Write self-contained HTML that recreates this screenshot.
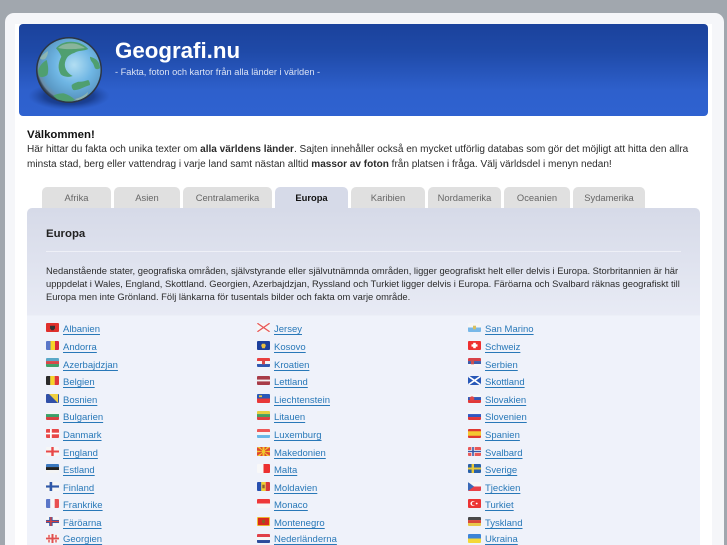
<!DOCTYPE html>
<html lang="sv"><head><meta charset="utf-8"><title>Geografi.nu</title>
<style>
html,body{margin:0;padding:0;width:727px;height:545px;overflow:hidden;background:#a1a7ae;font-family:"Liberation Sans",sans-serif;color:#222}
#w{position:relative;width:727px;height:545px;overflow:hidden;filter:blur(.3px)}
.a{position:absolute;white-space:nowrap}
#card{left:5px;top:13px;width:719px;height:532px;background:#f5f6f9;border-radius:9px 9px 0 0}
#in{left:15px;top:24px;width:697px;height:521px;background:#fff}
#hd{left:19px;top:24px;width:689px;height:92px;border-radius:4px;background:linear-gradient(#1b429c,#1f4aa8 30%,#2e60cc 72%,#2f62d0)}
.tab{position:absolute;top:187px;height:21px;background:#e0e0e0;border-radius:5px 5px 0 0;text-align:center;font-size:9.4px;line-height:21px;color:#666}
.tab.on{background:#d6dae8;color:#111;font-weight:bold}
#pn{left:27px;top:208px;width:673px;height:337px;border-radius:5px 5px 0 0;background:linear-gradient(#d6dae8,#e8ebf5 107px,#eff2fa 108px)}
.t{font-size:9.4px;line-height:12px;color:#2b2b2b}
.l{position:absolute;margin-top:2px;font-size:9.5px;line-height:11px;color:#2878b8;text-decoration:underline;text-underline-offset:2px;white-space:nowrap}
svg.f{position:absolute;width:13px;height:9px;border-radius:1px}
</style></head><body><div id="w">
<div class="a" id="card"></div><div class="a" id="in"></div><div class="a" id="hd"></div>

<svg class="a" style="left:28px;top:34px" width="84" height="76" viewBox="0 0 84 76">
<defs>
<radialGradient id="sh"><stop offset="0" stop-color="#0f2c6c" stop-opacity=".95"/><stop offset=".6" stop-color="#15357f" stop-opacity=".75"/><stop offset="1" stop-color="#1d459f" stop-opacity="0"/></radialGradient>
<radialGradient id="oc" cx=".58" cy=".42" r=".6"><stop offset="0" stop-color="#b2def2"/><stop offset=".5" stop-color="#6fb6e4"/><stop offset=".85" stop-color="#5b9ac6"/><stop offset=".96" stop-color="#6a8ca6"/><stop offset="1" stop-color="#3a4a5e"/></radialGradient>
<clipPath id="gc"><circle cx="41" cy="36" r="31.500"/></clipPath>
</defs>
<ellipse cx="41" cy="62" rx="41" ry="14" fill="url(#sh)"/>
<circle cx="41" cy="36" r="33" fill="#2c3644"/>
<circle cx="41" cy="36" r="31.500" fill="url(#oc)"/>
<g clip-path="url(#gc)" fill="#4f9f70">
<path d="M28 14.300C32 9 38 7.700 42 7.700C50 7.500 56 10 60.300 15C56 17 52 16.500 48.700 17.700C47 18.500 46 19 45.300 19.300C41 21 39.500 23 38.700 24.300C37 27 36.500 30 37 32.700C38 37 41 40 44.700 42C42 43 40 43 38.700 42.700C36 42.500 34 41.500 32.700 40.300C31 37 30.300 34 30.700 31C31 28 32 25 33.300 22.700C32 19 30 16.500 28 14.300Z"/>
<path d="M10.300 36C12 31 15 28 18.700 26C20 31 21 37 19.300 41C17 43 14 43.500 12 42.700C10.500 41 10 38.500 10.300 36Z"/>
<path d="M62 22.700C65 23.500 67 24.500 68.700 26C71 28.500 72 31 72 34.300C70 35.500 68 35.500 67 34.300C66 32 65.500 29.500 63.700 27.700C62.500 26 62 24.500 62 22.700Z"/>
<path d="M43.700 51C46 49 48 48.500 50.300 47.700C54 48 57 47 60.300 46C61.500 47.500 62 49 62 51C59 52 56.500 53 53.700 54.300C51 55.500 48 56.500 45.300 56C44 54.500 43.500 53 43.700 51Z"/>
<path d="M25.300 61.700C28 60 32 59.500 35.300 59.300C40 60.500 44 63 47 66C43 68 39 68.500 35.300 68.300C31 67 28 64.500 25.300 61.700Z"/>
</g>
<g clip-path="url(#gc)" fill="#9dbdaa" opacity=".75"><path d="M30 14C34 10 40 9 46 9.500C50 10 54 12 57 14C50 15 38 16 30 14Z"/><path d="M12 24C14 21 17 19 20 17C20 20 19 23 17 25C15 26 13 26 12 24Z"/><path d="M47 65C52 64 57 61 60 58C60 61 57 65 52 67C50 67 48 66 47 65Z"/></g>
</svg>

<div class="a" style="left:115px;top:38px;font-size:22.3px;line-height:26px;font-weight:bold;color:#fff">Geografi.nu</div>
<div class="a" style="left:115px;top:66px;font-size:9.25px;line-height:12px;color:#dbe3f5">- Fakta, foton och kartor från alla länder i världen -</div>

<div class="a" style="left:27px;top:128px;font-size:11.4px;line-height:14px;font-weight:bold;color:#111">Välkommen!</div>
<div class="a t" style="left:27px;top:144px;font-size:10.06px">Här hittar du fakta och unika texter om <b>alla världens länder</b>. Sajten innehåller också en mycket utförlig databas som gör det möjligt att hitta den allra</div>
<div class="a t" style="left:27px;top:159px;font-size:10.06px">minsta stad, berg eller vattendrag i varje land samt nästan alltid <b>massor av foton</b> från platsen i fråga. Välj världsdel i menyn nedan!</div>

<div class="tab" style="left:42px;width:69px">Afrika</div>
<div class="tab" style="left:114px;width:66px">Asien</div>
<div class="tab" style="left:183px;width:89px">Centralamerika</div>
<div class="tab on" style="left:275px;width:73px">Europa</div>
<div class="tab" style="left:351px;width:74px">Karibien</div>
<div class="tab" style="left:428px;width:73px">Nordamerika</div>
<div class="tab" style="left:504px;width:66px">Oceanien</div>
<div class="tab" style="left:573px;width:72px">Sydamerika</div>

<div class="a" id="pn"></div>
<div class="a" style="left:46px;top:227px;font-size:11.4px;line-height:14px;font-weight:bold;color:#222">Europa</div>
<div class="a" style="left:46px;top:251px;width:635px;height:1px;background:#eef0f7"></div>
<div class="a t" style="left:46px;top:265px">Nedanstående stater, geografiska områden, självstyrande eller självutnämnda områden, ligger geografiskt helt eller delvis i Europa. Storbritannien är här</div>
<div class="a t" style="left:46px;top:278px">upppdelat i Wales, England, Skottland. Georgien, Azerbajdzjan, Ryssland och Turkiet ligger delvis i Europa. Färöarna och Svalbard räknas geografiskt till</div>
<div class="a t" style="left:46px;top:291px">Europa men inte Grönland. Följ länkarna för tusentals bilder och fakta om varje område.</div>

<!-- column 1 -->
<svg class="f" style="left:46px;top:323px" preserveAspectRatio="none" viewBox="0 0 13 10"><rect width="13" height="10" fill="#e0302c"/><path d="M4 3h5v3l-1.500 2h-2L4 6z" fill="#333"/></svg><div class="l" style="left:63px;top:322px">Albanien</div>
<svg class="f" style="left:46px;top:341px" preserveAspectRatio="none" viewBox="0 0 13 10"><rect width="4.500" height="10" fill="#5a76c8"/><rect x="4.500" width="4.500" height="10" fill="#f5d428"/><rect x="9" width="4" height="10" fill="#d8283c"/></svg><div class="l" style="left:63px;top:340px">Andorra</div>
<svg class="f" style="left:46px;top:358px" preserveAspectRatio="none" viewBox="0 0 13 10"><rect width="13" height="3.400" fill="#5aa8c8"/><rect y="3.400" width="13" height="3.300" fill="#d84848"/><rect y="6.700" width="13" height="3.300" fill="#40a068"/></svg><div class="l" style="left:63px;top:358px">Azerbajdzjan</div>
<svg class="f" style="left:46px;top:376px" preserveAspectRatio="none" viewBox="0 0 13 10"><rect width="4.300" height="10" fill="#2a2a2a"/><rect x="4.300" width="4.400" height="10" fill="#f5d428"/><rect x="8.700" width="4.300" height="10" fill="#e0383c"/></svg><div class="l" style="left:63px;top:375px">Belgien</div>
<svg class="f" style="left:46px;top:394px" preserveAspectRatio="none" viewBox="0 0 13 10"><rect width="13" height="10" fill="#3050a8"/><path d="M3 0h9v10z" fill="#f0d040"/></svg><div class="l" style="left:63px;top:393px">Bosnien</div>
<svg class="f" style="left:46px;top:411px" preserveAspectRatio="none" viewBox="0 0 13 10"><rect width="13" height="3.400" fill="#f4f4f4"/><rect y="3.400" width="13" height="3.300" fill="#3aa068"/><rect y="6.700" width="13" height="3.300" fill="#d84040"/></svg><div class="l" style="left:63px;top:410px">Bulgarien</div>
<svg class="f" style="left:46px;top:429px" preserveAspectRatio="none" viewBox="0 0 13 10"><rect width="13" height="10" fill="#e84848"/><rect x="4" width="1.800" height="10" fill="#fff"/><rect y="4.100" width="13" height="1.800" fill="#fff"/></svg><div class="l" style="left:63px;top:428px">Danmark</div>
<svg class="f" style="left:46px;top:447px" preserveAspectRatio="none" viewBox="0 0 13 10"><rect width="13" height="10" fill="#f6f6f6"/><rect x="5.300" width="2.400" height="10" fill="#e84848"/><rect y="3.900" width="13" height="2.200" fill="#e84848"/></svg><div class="l" style="left:63px;top:446px">England</div>
<svg class="f" style="left:46px;top:464px" preserveAspectRatio="none" viewBox="0 0 13 10"><rect width="13" height="3.400" fill="#3a78c0"/><rect y="3.400" width="13" height="3.300" fill="#222"/><rect y="6.700" width="13" height="3.300" fill="#f4f4f4"/></svg><div class="l" style="left:63px;top:463px">Estland</div>
<svg class="f" style="left:46px;top:482px" preserveAspectRatio="none" viewBox="0 0 13 10"><rect width="13" height="10" fill="#f6f6f6"/><rect x="3.600" width="2.600" height="10" fill="#3058a8"/><rect y="3.800" width="13" height="2.400" fill="#3058a8"/></svg><div class="l" style="left:63px;top:481px">Finland</div>
<svg class="f" style="left:46px;top:499px" preserveAspectRatio="none" viewBox="0 0 13 10"><rect width="4.300" height="10" fill="#5a76c8"/><rect x="4.300" width="4.400" height="10" fill="#f6f6f6"/><rect x="8.700" width="4.300" height="10" fill="#e85050"/></svg><div class="l" style="left:63px;top:498px">Frankrike</div>
<svg class="f" style="left:46px;top:517px" preserveAspectRatio="none" viewBox="0 0 13 10"><rect width="13" height="10" fill="#f6f6f6"/><rect x="3.200" width="3.400" height="10" fill="#3058a8"/><rect y="3.300" width="13" height="3.400" fill="#3058a8"/><rect x="4.200" width="1.400" height="10" fill="#d84040"/><rect y="4.300" width="13" height="1.400" fill="#d84040"/></svg><div class="l" style="left:63px;top:516px">Färöarna</div>
<svg class="f" style="left:46px;top:534px" preserveAspectRatio="none" viewBox="0 0 13 10"><rect width="13" height="10" fill="#f6f6f6"/><rect x="5.500" width="2" height="10" fill="#e05050"/><rect y="4" width="13" height="2" fill="#e05050"/><path d="M2 1h2v3H2zM9 1h2v3H9zM2 6.500h2v3H2zM9 6.500h2v3H9z" fill="#e88080"/></svg><div class="l" style="left:63px;top:532px">Georgien</div>

<!-- column 2 -->
<svg class="f" style="left:257px;top:323px" preserveAspectRatio="none" viewBox="0 0 13 10"><rect width="13" height="10" fill="#f6f6f6"/><path d="M0 0l13 10M13 0L0 10" stroke="#e85858" stroke-width="1.400"/></svg><div class="l" style="left:274px;top:322px">Jersey</div>
<svg class="f" style="left:257px;top:341px" preserveAspectRatio="none" viewBox="0 0 13 10"><rect width="13" height="10" fill="#1c3f9c"/><path d="M5 3h3l.8 2-1 3h-2.600l-1-3z" fill="#e8c040"/></svg><div class="l" style="left:274px;top:340px">Kosovo</div>
<svg class="f" style="left:257px;top:358px" preserveAspectRatio="none" viewBox="0 0 13 10"><rect width="13" height="3.400" fill="#e84040"/><rect y="3.400" width="13" height="3.300" fill="#f6f6f6"/><rect y="6.700" width="13" height="3.300" fill="#3058b0"/><rect x="5" y="2.500" width="3" height="4.500" fill="#d84848"/></svg><div class="l" style="left:274px;top:358px">Kroatien</div>
<svg class="f" style="left:257px;top:376px" preserveAspectRatio="none" viewBox="0 0 13 10"><rect width="13" height="10" fill="#a83c48"/><rect y="4" width="13" height="2" fill="#f0f0f0"/></svg><div class="l" style="left:274px;top:375px">Lettland</div>
<svg class="f" style="left:257px;top:394px" preserveAspectRatio="none" viewBox="0 0 13 10"><rect width="13" height="5" fill="#2858b8"/><rect y="5" width="13" height="5" fill="#e83838"/><rect x="2" y="1.500" width="3" height="2" fill="#e8c840"/></svg><div class="l" style="left:274px;top:393px">Liechtenstein</div>
<svg class="f" style="left:257px;top:411px" preserveAspectRatio="none" viewBox="0 0 13 10"><rect width="13" height="3.400" fill="#e8d040"/><rect y="3.400" width="13" height="3.300" fill="#48a060"/><rect y="6.700" width="13" height="3.300" fill="#e04040"/></svg><div class="l" style="left:274px;top:410px">Litauen</div>
<svg class="f" style="left:257px;top:429px" preserveAspectRatio="none" viewBox="0 0 13 10"><rect width="13" height="3.400" fill="#ee5858"/><rect y="3.400" width="13" height="3.300" fill="#f6f6f6"/><rect y="6.700" width="13" height="3.300" fill="#68b8e8"/></svg><div class="l" style="left:274px;top:428px">Luxemburg</div>
<svg class="f" style="left:257px;top:447px" preserveAspectRatio="none" viewBox="0 0 13 10"><rect width="13" height="10" fill="#e04830"/><path d="M6.500 5L0 0h3zM6.500 5L13 0h-3zM6.500 5L0 10h3zM6.500 5L13 10h-3zM6.500 5L0 4v2zM6.500 5L13 4v2zM5.500 0h2v10h-2z" fill="#f0c830"/><circle cx="6.500" cy="5" r="1.800" fill="#f0c830"/></svg><div class="l" style="left:274px;top:446px">Makedonien</div>
<svg class="f" style="left:257px;top:464px" preserveAspectRatio="none" viewBox="0 0 13 10"><rect width="6.500" height="10" fill="#f8f8f8"/><rect x="6.500" width="6.500" height="10" fill="#ec3030"/></svg><div class="l" style="left:274px;top:463px">Malta</div>
<svg class="f" style="left:257px;top:482px" preserveAspectRatio="none" viewBox="0 0 13 10"><rect width="4.300" height="10" fill="#2850b0"/><rect x="4.300" width="4.400" height="10" fill="#f0d030"/><rect x="8.700" width="4.300" height="10" fill="#d83838"/><rect x="5.300" y="3" width="2.400" height="4" fill="#906030"/></svg><div class="l" style="left:274px;top:481px">Moldavien</div>
<svg class="f" style="left:257px;top:499px" preserveAspectRatio="none" viewBox="0 0 13 10"><rect width="13" height="5" fill="#ee3838"/><rect y="5" width="13" height="5" fill="#f6f6f6"/></svg><div class="l" style="left:274px;top:498px">Monaco</div>
<svg class="f" style="left:257px;top:517px" preserveAspectRatio="none" viewBox="0 0 13 10"><rect width="13" height="10" fill="#eec030"/><rect x="1" y="1" width="11" height="8" fill="#d82820"/><path d="M5 3h3v3l-1.500 1.500L5 6z" fill="#8a6020"/></svg><div class="l" style="left:274px;top:516px">Montenegro</div>
<svg class="f" style="left:257px;top:534px" preserveAspectRatio="none" viewBox="0 0 13 10"><rect width="13" height="3.400" fill="#e04048"/><rect y="3.400" width="13" height="3.300" fill="#f6f6f6"/><rect y="6.700" width="13" height="3.300" fill="#2c4c9c"/></svg><div class="l" style="left:274px;top:532px">Nederländerna</div>

<!-- column 3 -->
<svg class="f" style="left:468px;top:323px" preserveAspectRatio="none" viewBox="0 0 13 10"><rect width="13" height="5" fill="#f6f6f6"/><rect y="5" width="13" height="5" fill="#78b8e8"/><rect x="5" y="3" width="3" height="4" fill="#d8c060"/></svg><div class="l" style="left:485px;top:322px">San Marino</div>
<svg class="f" style="left:468px;top:341px" preserveAspectRatio="none" viewBox="0 0 13 10"><rect width="13" height="10" fill="#ee3030"/><rect x="5.200" y="2" width="2.600" height="6" fill="#fff"/><rect x="3.500" y="3.700" width="6" height="2.600" fill="#fff"/></svg><div class="l" style="left:485px;top:340px">Schweiz</div>
<svg class="f" style="left:468px;top:358px" preserveAspectRatio="none" viewBox="0 0 13 10"><rect width="13" height="3.400" fill="#d84048"/><rect y="3.400" width="13" height="3.300" fill="#3c5cac"/><rect y="6.700" width="13" height="3.300" fill="#f6f6f6"/><rect x="3" y="2" width="3" height="5" fill="#c85050"/></svg><div class="l" style="left:485px;top:358px">Serbien</div>
<svg class="f" style="left:468px;top:376px" preserveAspectRatio="none" viewBox="0 0 13 10"><rect width="13" height="10" fill="#2858b8"/><path d="M0 0l13 10M13 0L0 10" stroke="#fff" stroke-width="1.800"/></svg><div class="l" style="left:485px;top:375px">Skottland</div>
<svg class="f" style="left:468px;top:394px" preserveAspectRatio="none" viewBox="0 0 13 10"><rect width="13" height="3.400" fill="#f6f6f6"/><rect y="3.400" width="13" height="3.300" fill="#3058b8"/><rect y="6.700" width="13" height="3.300" fill="#e03838"/><circle cx="4" cy="5" r="2.400" fill="#e04848"/></svg><div class="l" style="left:485px;top:393px">Slovakien</div>
<svg class="f" style="left:468px;top:411px" preserveAspectRatio="none" viewBox="0 0 13 10"><rect width="13" height="3.400" fill="#f6f6f6"/><rect y="3.400" width="13" height="3.300" fill="#3058c0"/><rect y="6.700" width="13" height="3.300" fill="#e03838"/></svg><div class="l" style="left:485px;top:410px">Slovenien</div>
<svg class="f" style="left:468px;top:429px" preserveAspectRatio="none" viewBox="0 0 13 10"><rect width="13" height="10" fill="#e03830"/><rect y="2.500" width="13" height="5" fill="#f4c830"/></svg><div class="l" style="left:485px;top:428px">Spanien</div>
<svg class="f" style="left:468px;top:447px" preserveAspectRatio="none" viewBox="0 0 13 10"><rect width="13" height="10" fill="#e85858"/><rect x="3.400" width="3.200" height="10" fill="#fff"/><rect y="3.400" width="13" height="3.200" fill="#fff"/><rect x="4.200" width="1.600" height="10" fill="#3858a8"/><rect y="4.200" width="13" height="1.600" fill="#3858a8"/></svg><div class="l" style="left:485px;top:446px">Svalbard</div>
<svg class="f" style="left:468px;top:464px" preserveAspectRatio="none" viewBox="0 0 13 10"><rect width="13" height="10" fill="#2860a8"/><rect x="3.600" width="2.400" height="10" fill="#e8c838"/><rect y="3.900" width="13" height="2.200" fill="#e8c838"/></svg><div class="l" style="left:485px;top:463px">Sverige</div>
<svg class="f" style="left:468px;top:482px" preserveAspectRatio="none" viewBox="0 0 13 10"><rect width="13" height="5" fill="#f6f6f6"/><rect y="5" width="13" height="5" fill="#e84048"/><path d="M0 0l6 5L0 10z" fill="#3868b8"/></svg><div class="l" style="left:485px;top:481px">Tjeckien</div>
<svg class="f" style="left:468px;top:499px" preserveAspectRatio="none" viewBox="0 0 13 10"><rect width="13" height="10" fill="#ec3434"/><circle cx="5" cy="5" r="2.600" fill="#fff"/><circle cx="5.900" cy="5" r="2" fill="#ec3434"/><circle cx="8.700" cy="5" r="1" fill="#fff"/></svg><div class="l" style="left:485px;top:498px">Turkiet</div>
<svg class="f" style="left:468px;top:517px" preserveAspectRatio="none" viewBox="0 0 13 10"><rect width="13" height="3.400" fill="#484848"/><rect y="3.400" width="13" height="3.300" fill="#d84838"/><rect y="6.700" width="13" height="3.300" fill="#e8c848"/></svg><div class="l" style="left:485px;top:516px">Tyskland</div>
<svg class="f" style="left:468px;top:534px" preserveAspectRatio="none" viewBox="0 0 13 10"><rect width="13" height="5" fill="#3c84d8"/><rect y="5" width="13" height="5" fill="#f4d838"/></svg><div class="l" style="left:485px;top:532px">Ukraina</div>
</div></body></html>
